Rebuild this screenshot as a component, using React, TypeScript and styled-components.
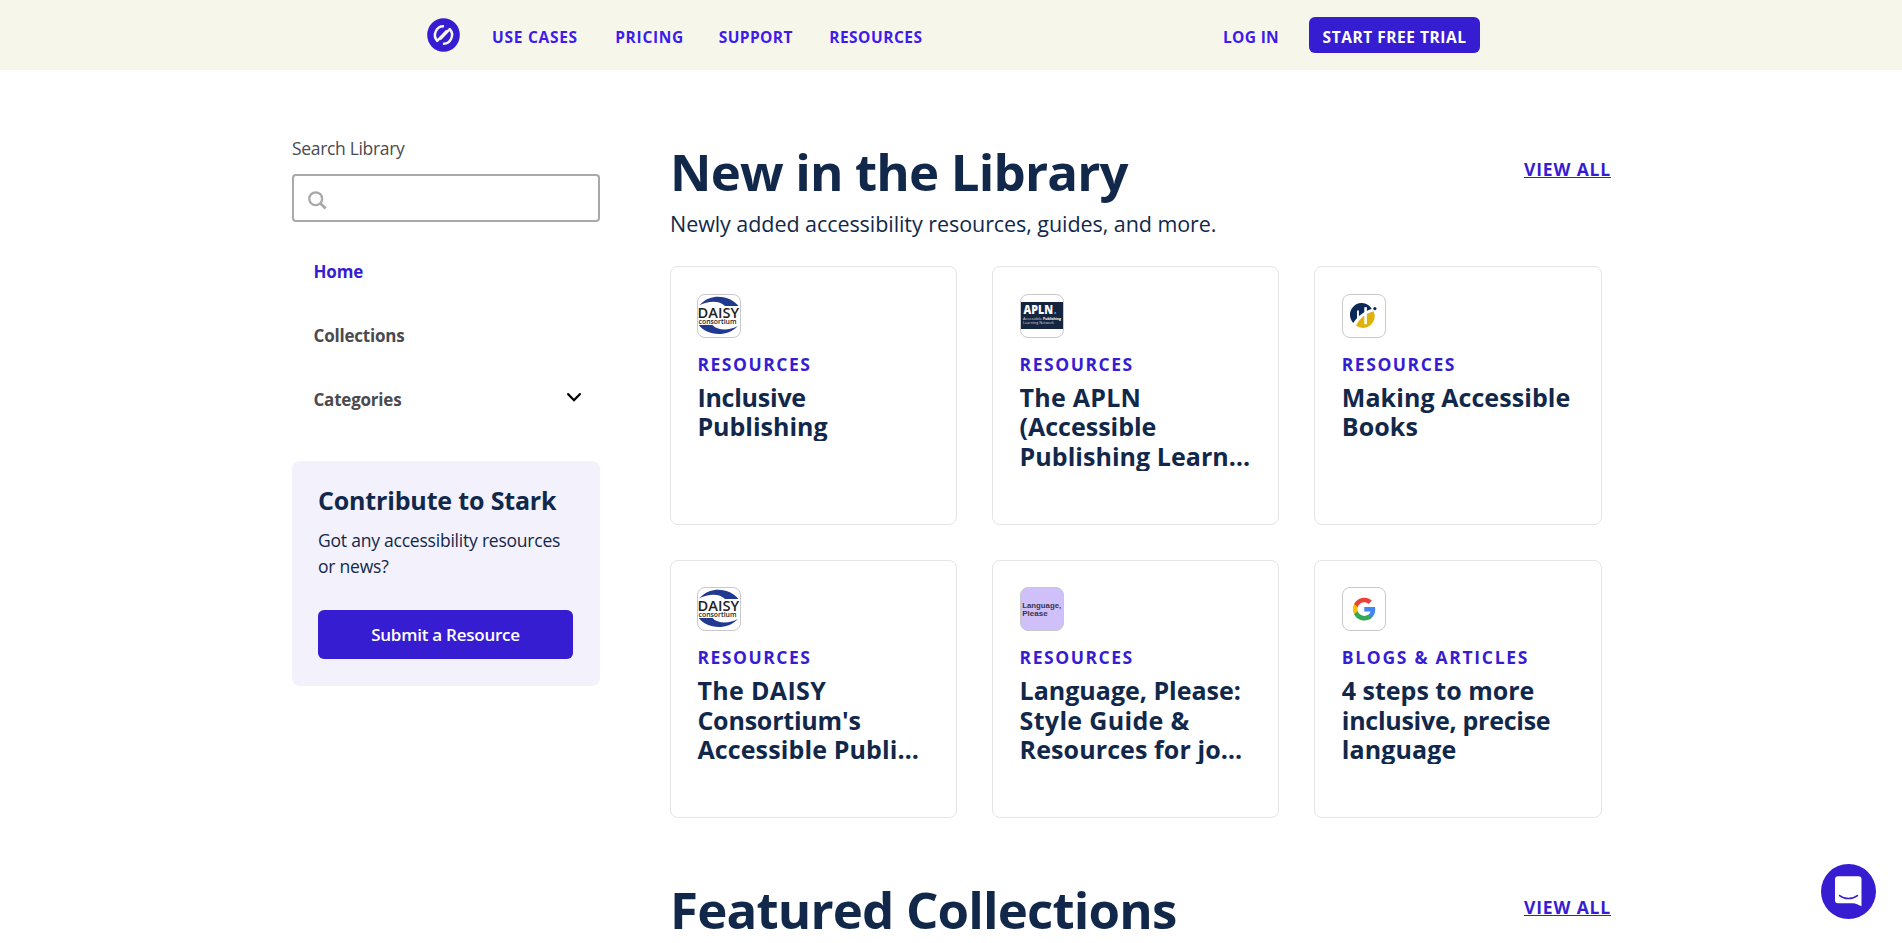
import React from 'react';
import styled, { createGlobalStyle } from 'styled-components';

const color = {
  brand: '#371dd2',
  link: '#3d1bee',
  navy: '#11284b',
  gray: '#4a4a4f',
  cream: '#f7f6eb',
  lavender: '#f3f1fc',
};

const GlobalStyle = createGlobalStyle`
  * { box-sizing: border-box; }
  body {
    margin: 0;
    background: #fff;
    color: ${color.navy};
    font-family: "Open Sans", "Noto Sans", sans-serif;
  }
  a { color: inherit; text-decoration: none; }
  h2, h3, p { margin: 0; }
`;

const Page = styled.div`
  height: 943px;
  overflow: hidden;
`;

/* Header */

const Header = styled.header`
  height: 70px;
  padding-left: 5px;
  background: ${color.cream};
  display: flex;
  justify-content: center;
`;

const HeaderInner = styled.div`
  width: 1053px;
  display: flex;
  align-items: center;
`;

const Logo = styled.a`
  width: 65px;
  height: 34px;
  svg { display: block; }
`;

const NavLink = styled.a<{ $width: number; $spacing: number }>`
  width: ${(p) => p.$width}px;
  padding-top: 3px;
  color: ${color.link};
  font-size: 15.5px;
  font-weight: 700;
  line-height: 34px;
  letter-spacing: ${(p) => p.$spacing}px;
  white-space: nowrap;
`;

const HeaderActions = styled.div`
  display: flex;
  align-items: center;
  margin-left: auto;
`;

const TrialButton = styled.a`
  width: 171px;
  height: 36px;
  padding-top: 2.5px;
  border-radius: 6px;
  background: ${color.brand};
  color: #fff;
  font-size: 15.5px;
  font-weight: 700;
  line-height: 34px;
  letter-spacing: 0.53px;
  text-align: center;
  white-space: nowrap;
`;

/* Page body */

const Layout = styled.div`
  display: flex;
  gap: 70px;
  padding: 0 291px 0 292px;
`;

const Sidebar = styled.aside`
  width: 308px;
  flex: none;
  padding-top: 66px;
`;

const SearchLabel = styled.label`
  display: block;
  height: 24px;
  color: ${color.gray};
  font-size: 17.5px;
  line-height: 24px;
  letter-spacing: -0.33px;
`;

const SearchField = styled.div`
  height: 48px;
  margin-top: 14px;
  padding: 5px 14px 0;
  border: 2px solid #a9a9ab;
  border-radius: 4px;
  display: flex;
  align-items: center;
`;

const SideNav = styled.nav`
  margin-top: 17px;
`;

const SideLink = styled.a<{ $active?: boolean; $spacing: number }>`
  height: 64px;
  padding: 0 19px 0 21.5px;
  display: flex;
  align-items: center;
  justify-content: space-between;
  color: ${(p) => (p.$active ? color.brand : color.gray)};
  font-size: 17px;
  font-weight: 700;
  letter-spacing: ${(p) => p.$spacing}px;
  svg { margin-top: -3px; }
`;

const Contribute = styled.section`
  height: 225px;
  margin-top: 30px;
  padding: 23.4px 27px 0 26px;
  border-radius: 8px;
  background: ${color.lavender};
`;

const ContributeTitle = styled.h3`
  font-size: 25px;
  font-weight: 700;
  line-height: 32px;
  letter-spacing: -0.16px;
  white-space: nowrap;
`;

const ContributeText = styled.p`
  margin-top: 11px;
  font-size: 17.5px;
  line-height: 26px;
  letter-spacing: -0.22px;
`;

const SubmitButton = styled.a`
  display: block;
  height: 49px;
  margin-top: 30.6px;
  border-radius: 6px;
  background: ${color.brand};
  color: #fff;
  font-size: 17px;
  font-weight: 600;
  line-height: 49px;
  letter-spacing: -0.25px;
  text-align: center;
`;

const Content = styled.main`
  flex: 1;
  padding-top: 71px;
`;

const SectionHead = styled.div`
  display: flex;
  justify-content: space-between;
  align-items: flex-start;
`;

const SectionTitle = styled.h2`
  font-size: 51px;
  font-weight: 700;
  line-height: 60px;
  letter-spacing: -0.83px;
  white-space: nowrap;
`;

const ViewAll = styled.a`
  margin-top: 16px;
  color: ${color.brand};
  font-size: 17.5px;
  font-weight: 700;
  line-height: 24px;
  letter-spacing: 0.84px;
  text-decoration: underline;
  text-decoration-thickness: 1px;
  text-underline-offset: 1px;
`;

const SectionText = styled.p`
  margin-top: 8.4px;
  font-size: 21.5px;
  line-height: 30px;
  letter-spacing: -0.06px;
`;

const CardGrid = styled.div`
  width: 931.7px;
  margin: 27px 0 61px;
  display: grid;
  grid-template-columns: repeat(3, 1fr);
  grid-auto-rows: 258.3px;
  gap: 35px 34.9px;
`;

const Card = styled.article`
  padding: 26.7px 0 0 26.4px;
  border: 1px solid #e4e4e6;
  border-radius: 8px;
`;

const Thumb = styled.div<{ $bg?: string }>`
  width: 44px;
  height: 44px;
  border: 1px solid #c9c9cc;
  border-radius: 8px;
  background: ${(p) => p.$bg ?? '#fff'};
  overflow: hidden;
  svg { display: block; margin: -1px; }
`;

const CardLabel = styled.p<{ $spacing: number }>`
  margin-top: 13px;
  color: ${color.brand};
  font-size: 17.5px;
  font-weight: 700;
  line-height: 26px;
  letter-spacing: ${(p) => p.$spacing}px;
  white-space: nowrap;
`;

const TitleLine = styled.span<{ $spacing: number }>`
  display: block;
  letter-spacing: ${(p) => p.$spacing}px;
  white-space: nowrap;
`;

const CardTitle = styled.h3`
  margin-top: 5.6px;
  font-size: 25px;
  font-weight: 700;
  line-height: 29.6px;
  overflow: hidden;
  ${TitleLine}:last-child { margin-bottom: -0.6px; }
`;

const ChatButton = styled.button`
  position: fixed;
  right: 26px;
  bottom: 24px;
  width: 55px;
  height: 55px;
  padding: 0;
  border: 0;
  border-radius: 50%;
  background: ${color.brand};
  svg { display: block; }
`;

/* Drawings */

const StarkMark = () => (
  <svg width="33" height="34" viewBox="0 0 33 33" preserveAspectRatio="none">
    <circle cx="16.5" cy="16.5" r="16.3" fill={color.brand} />
    <g fill="none" stroke={color.cream} strokeWidth="2.5" strokeLinejoin="round">
      <path d="M17 8A8.5 8.5 0 0 0 10.2 22.2L20 12.2" />
      <path d="M16 25A8.5 8.5 0 0 0 22.8 10.8L13 20.8" />
    </g>
  </svg>
);

const SearchIcon = () => (
  <svg width="19" height="19" viewBox="0 0 19 19" fill="none" stroke="#a9a9ab" strokeWidth="2.3">
    <circle cx="7.7" cy="7.7" r="6.4" />
    <path d="M12.3 12.3L17.6 17.6" strokeWidth="2.8" />
  </svg>
);

const Chevron = () => (
  <svg width="14" height="9" viewBox="0 0 14 9" fill="none" stroke="#000" strokeWidth="2.3">
    <path d="M1.2 1.2L7 7.2L12.8 1.2" strokeLinecap="round" />
  </svg>
);

const DaisyLogo = () => (
  <svg width="44" height="44" viewBox="0 0 44 44">
    <path d="M2.3 11.2C9 4.5 15 2.7 21 2.7C30 2.7 37 6.5 41.5 12H28C23 6.5 12 6.3 2.3 11.2Z" fill="#21398f" />
    <path d="M1.8 31H15.5C20 36.5 32 37 41 32C35 38 28.5 40 22 40C13 40 6 36.5 1.8 31Z" fill="#21398f" />
    <text x="0.6" y="24.2" fontSize="14.8" fontWeight="600" fill="#222" textLength="41.6" lengthAdjust="spacingAndGlyphs">DAISY</text>
    <text x="1.6" y="30" fontSize="7.4" fontWeight="600" fill="#222" textLength="37.8" lengthAdjust="spacingAndGlyphs">consortium</text>
  </svg>
);

const AplnLogo = () => (
  <svg width="44" height="44" viewBox="0 0 44 44">
    <rect x="1" y="8" width="42" height="27" fill="#15243f" />
    <text x="3.6" y="20" fontSize="11.5" fontWeight="800" fill="#fff" textLength="29.4" lengthAdjust="spacingAndGlyphs">APLN</text>
    <rect x="34.2" y="18" width="2" height="2" fill="#1f9ad6" />
    <text x="3" y="25.7" fontSize="4" fill="#d5d9e0" textLength="19" lengthAdjust="spacingAndGlyphs">Accessible</text>
    <text x="23" y="25.7" fontSize="4" fontWeight="700" fill="#fff" textLength="18" lengthAdjust="spacingAndGlyphs">Publishing</text>
    <text x="3" y="29.7" fontSize="4" fill="#d5d9e0" textLength="31" lengthAdjust="spacingAndGlyphs">Learning Network</text>
  </svg>
);

const BooksLogo = () => (
  <svg width="44" height="44" viewBox="0 0 44 44">
    <path d="M11.3 29A11.7 11.7 0 1 1 29.8 15C23 17 16 21.5 11.3 29Z" fill="#0b2858" />
    <path d="M31.6 17.2A11.7 11.7 0 0 1 14 31.6C18 23.5 24 19.5 31.6 17.2Z" fill="#dfb20b" />
    <rect x="15" y="16.5" width="1.9" height="9" fill="#fff" />
    <rect x="22.3" y="13.2" width="2.6" height="17" fill="#fff" />
    <circle cx="32.9" cy="14.6" r="1.6" fill="#0b2858" />
  </svg>
);

const LanguageLogo = () => (
  <svg width="44" height="44" viewBox="0 0 44 44" fontFamily='"Liberation Sans", sans-serif' fontWeight="700" fill="#3b3449">
    <text x="2.2" y="21" fontSize="8" textLength="39" lengthAdjust="spacingAndGlyphs">Language,</text>
    <text x="2.2" y="28.7" fontSize="8" textLength="25.5" lengthAdjust="spacingAndGlyphs">Please</text>
  </svg>
);

const GoogleLogo = () => (
  <svg width="44" height="44" viewBox="0 0 44 44">
    <g transform="translate(9.8 9.6) scale(1.04)">
      <path fill="#4285F4" d="M22.56 12.25c0-.78-.07-1.53-.2-2.25H12v4.26h5.92c-.26 1.37-1.04 2.53-2.21 3.31v2.77h3.57c2.08-1.92 3.28-4.74 3.28-8.09z" />
      <path fill="#34A853" d="M12 23c2.97 0 5.46-.98 7.28-2.66l-3.57-2.77c-.98.66-2.23 1.06-3.71 1.06-2.86 0-5.29-1.93-6.16-4.53H2.18v2.84C3.99 20.53 7.7 23 12 23z" />
      <path fill="#FBBC05" d="M5.84 14.09c-.22-.66-.35-1.36-.35-2.09s.13-1.43.35-2.09V7.07H2.18C1.43 8.55 1 10.22 1 12s.43 3.45 1.18 4.93l3.66-2.84z" />
      <path fill="#EA4335" d="M12 5.38c1.62 0 3.06.56 4.21 1.64l3.15-3.15C17.45 2.09 14.97 1 12 1 7.7 1 3.99 3.47 2.18 7.07l3.66 2.84c.87-2.6 3.3-4.53 6.16-4.53z" />
    </g>
  </svg>
);

const ChatIcon = () => (
  <svg width="55" height="55" viewBox="0 0 55 55">
    <path d="M17 12.3H37.5A3 3 0 0 1 40.5 15.3V42.2C37.5 41 34.5 39.3 32 39.2H17A3 3 0 0 1 14 36.2V15.3A3 3 0 0 1 17 12.3Z" fill="#fff" />
    <path d="M18.6 31.6C23.5 35.5 31.5 35.5 36.4 31.6" fill="none" stroke={color.brand} strokeWidth="1.6" strokeLinecap="round" />
  </svg>
);

/* Data */

type Line = [text: string, spacing: number];

interface Resource {
  logo: React.ReactNode;
  bg?: string;
  label: Line;
  title: Line[];
}

const resources: Resource[] = [
  {
    logo: <DaisyLogo />,
    label: ['RESOURCES', 1.54],
    title: [['Inclusive', -0.24], ['Publishing', -0.01]],
  },
  {
    logo: <AplnLogo />,
    label: ['RESOURCES', 1.54],
    title: [['The APLN', 0.25], ['(Accessible', -0.01], ['Publishing Learn…', 0.04]],
  },
  {
    logo: <BooksLogo />,
    label: ['RESOURCES', 1.54],
    title: [['Making Accessible', 0.08], ['Books', 0.1]],
  },
  {
    logo: <DaisyLogo />,
    label: ['RESOURCES', 1.54],
    title: [['The DAISY', 0.35], ["Consortium's", -0.2], ['Accessible Publi…', 0.12]],
  },
  {
    logo: <LanguageLogo />,
    bg: '#cfc0fa',
    label: ['RESOURCES', 1.54],
    title: [['Language, Please:', 0], ['Style Guide &', 0.33], ['Resources for jo…', 0.1]],
  },
  {
    logo: <GoogleLogo />,
    label: ['BLOGS & ARTICLES', 1.7],
    title: [['4 steps to more', 0], ['inclusive, precise', -0.26], ['language', 0.1]],
  },
];

const ResourceCard = ({ logo, bg, label, title }: Resource) => (
  <Card>
    <Thumb $bg={bg}>{logo}</Thumb>
    <CardLabel $spacing={label[1]}>{label[0]}</CardLabel>
    <CardTitle>
      {title.map(([text, spacing]) => (
        <TitleLine key={text} $spacing={spacing}>{text}</TitleLine>
      ))}
    </CardTitle>
  </Card>
);

export default function App() {
  return (
    <Page>
      <GlobalStyle />
      <Header>
        <HeaderInner>
          <Logo href="#"><StarkMark /></Logo>
          <NavLink href="#" $width={123.2} $spacing={0.73}>USE CASES</NavLink>
          <NavLink href="#" $width={103.6} $spacing={0.7}>PRICING</NavLink>
          <NavLink href="#" $width={110.4} $spacing={0.4}>SUPPORT</NavLink>
          <NavLink href="#" $width={96} $spacing={0.5}>RESOURCES</NavLink>
          <HeaderActions>
            <NavLink href="#" $width={86} $spacing={0.33}>LOG IN</NavLink>
            <TrialButton href="#">START FREE TRIAL</TrialButton>
          </HeaderActions>
        </HeaderInner>
      </Header>
      <Layout>
        <Sidebar>
          <SearchLabel>Search Library</SearchLabel>
          <SearchField><SearchIcon /></SearchField>
          <SideNav>
            <SideLink href="#" $active $spacing={-0.16}>Home</SideLink>
            <SideLink href="#" $spacing={-0.2}>Collections</SideLink>
            <SideLink href="#" $spacing={-0.22}>Categories<Chevron /></SideLink>
          </SideNav>
          <Contribute>
            <ContributeTitle>Contribute to Stark</ContributeTitle>
            <ContributeText>Got any accessibility resources or news?</ContributeText>
            <SubmitButton href="#">Submit a Resource</SubmitButton>
          </Contribute>
        </Sidebar>
        <Content>
          <SectionHead>
            <SectionTitle>New in the Library</SectionTitle>
            <ViewAll href="#">VIEW ALL</ViewAll>
          </SectionHead>
          <SectionText>Newly added accessibility resources, guides, and more.</SectionText>
          <CardGrid>
            {resources.map((resource) => (
              <ResourceCard key={resource.title[0][0]} {...resource} />
            ))}
          </CardGrid>
          <SectionHead>
            <SectionTitle>Featured Collections</SectionTitle>
            <ViewAll href="#">VIEW ALL</ViewAll>
          </SectionHead>
        </Content>
      </Layout>
      <ChatButton aria-label="Open chat"><ChatIcon /></ChatButton>
    </Page>
  );
}
